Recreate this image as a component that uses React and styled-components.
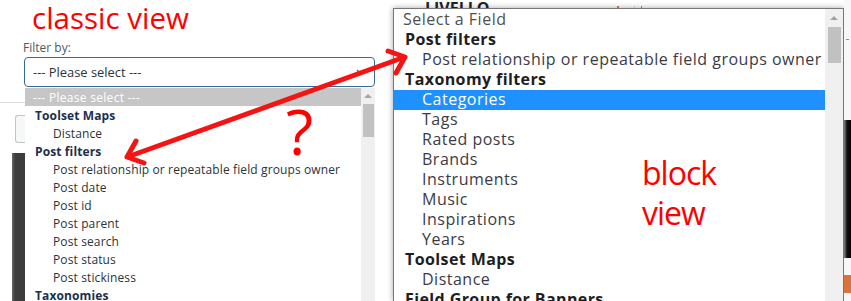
import React from 'react';
import styled, { createGlobalStyle } from 'styled-components';

const GlobalStyle = createGlobalStyle`
  html, body { margin: 0; padding: 0; background: #fff; }
  body { font-family: "Open Sans", sans-serif; overflow: hidden; }
`;

const Page = styled.div`
  position: relative;
  width: 851px;
  height: 301px;
  overflow: hidden;
  display: flex;
  background: #fff;
`;

/* ---------- classic view (left) ---------- */
const LeftPane = styled.section`
  width: 393px;
  flex: none;
  display: flex;
  flex-direction: column;
`;

const Title = styled.div`
  height: 34px;
  padding-left: 32px;
  font-size: 29.5px;
  line-height: 36px;
  color: #ff0000;
  white-space: nowrap;
`;

const FieldLabel = styled.label`
  display: block;
  margin-top: 6px;
  padding-left: 23px;
  font-size: 12px;
  line-height: 16px;
  color: #50575e;
`;

const SelectBox = styled.div`
  margin: 1px 0 0 24px;
  width: 351px;
  height: 30px;
  box-sizing: border-box;
  border: 1px solid #3b6a93;
  border-radius: 4px;
  display: flex;
  align-items: center;
  justify-content: space-between;
  padding: 0 9px 0 8px;
  font-size: 12.9px;
  color: #2c3338;
  background: #fff;
`;

const DropRow = styled.div`
  flex: 1;
  margin-top: 1px;
  display: grid;
  grid-template-columns: 25px 350px 18px;
  min-height: 0;
`;

const Gutter = styled.div`
  display: flex;
  flex-direction: column;
`;

const GutterLine = styled.div`
  margin-top: 14px;
  height: 1px;
  background: #dcdcde;
`;

const GutterButton = styled.div`
  margin: 12px 0 0 15px;
  height: 28px;
  box-sizing: border-box;
  border: 1px solid #c3c4c7;
  border-right: none;
  border-radius: 3px 0 0 3px;
  background: #f6f7f7;
`;

const GutterDark = styled.div`
  margin: 10px 0 0 12px;
  flex: 1;
  background: linear-gradient(90deg, #6a6a6a, #3e3e3e 3px, #3c3c3c);
`;

const ListBox = styled.div`
  display: flex;
  background: #fff;
  overflow: hidden;
`;

const Options = styled.ul`
  list-style: none;
  margin: 0;
  padding: 0;
  flex: 1;
  display: flex;
  flex-direction: column;
`;

const ClassicOption = styled.li`
  height: 18px;
  flex: none;
  line-height: 19px;
  font-size: 12px;
  letter-spacing: ${p => (p.$kind === 'placeholder' ? '0.3px' : '0.12px')};
  white-space: nowrap;
  padding-left: ${p => (p.$kind === 'group' ? '10px' : p.$kind === 'item' ? '28px' : '8px')};
  font-weight: ${p => (p.$kind === 'group' ? 700 : 400)};
  color: ${p => (p.$kind === 'placeholder' ? '#fff' : p.$kind === 'group' ? '#1d2f4c' : '#2c3338')};
  background: ${p => (p.$kind === 'placeholder' ? '#c6c6c6' : 'transparent')};
`;

const Scroll = styled.div`
  width: ${p => p.$w}px;
  flex: none;
  background: #f0f0f0;
  display: flex;
  flex-direction: column;
  align-items: center;
`;

const ScrollArrow = styled.div`
  height: ${p => p.$h}px;
  width: 100%;
  display: flex;
  align-items: center;
  justify-content: center;
  &::before {
    content: '';
    border-left: 4px solid transparent;
    border-right: 4px solid transparent;
    border-bottom: 4px solid #a3a3a3;
  }
`;

const ScrollThumb = styled.div`
  width: ${p => p.$w}px;
  height: ${p => p.$h}px;
  background: #c1c1c1;
`;

const Blank = styled.div`
  background: #fff;
`;

/* ---------- block view (right) ---------- */
const RightPane = styled.section`
  width: 451px;
  flex: none;
  display: flex;
  flex-direction: column;
`;

const TopStrip = styled.div`
  height: 8px;
  flex: none;
  display: grid;
  grid-template-columns: 32px 192px 2px 15px 1px 6px 1px 1fr;
  align-items: end;
  overflow: hidden;
`;

const StripText = styled.span`
  grid-column: 2;
  font-size: 16px;
  font-weight: 700;
  line-height: 16px;
  margin-bottom: -2px;
  color: #1d2327;
  white-space: nowrap;
`;

const StripMark = styled.span`
  grid-column: ${p => p.$col};
  height: 8px;
  background: ${p => p.$bg};
`;

const FieldList = styled.div`
  flex: 1;
  display: flex;
  border: 1px solid #777;
  border-bottom: none;
  background: #fff;
  box-shadow: 0 0 6px rgba(0, 0, 0, 0.35);
  min-height: 0;
`;

const FieldOptions = styled.ul`
  list-style: none;
  margin: 0;
  padding: 1px 0 0;
  flex: 1;
  display: flex;
  flex-direction: column;
`;

const FieldOption = styled.li`
  height: 20px;
  flex: none;
  box-sizing: border-box;
  padding-bottom: 2px;
  line-height: 18px;
  font-size: 16px;
  white-space: nowrap;
  letter-spacing: ${p => (p.$kind === 'group' ? '0.4px' : '0.5px')};
  padding-left: ${p => (p.$kind === 'group' ? '11px' : p.$kind === 'item' ? '28px' : '9px')};
  font-weight: ${p => (p.$kind === 'group' ? 700 : 400)};
  color: ${p =>
    p.$active ? '#fff' : p.$kind === 'group' ? '#1e1e1e' : p.$kind === 'item' ? '#3b3b47' : '#505050'};
  background: ${p => (p.$active ? '#1e90ff' : 'transparent')};
`;

const RightEdge = styled.div`
  width: 7px;
  flex: none;
  display: flex;
  flex-direction: column;
  background: #f7f7f7;
`;

const EdgeDash = styled.div`
  margin: 39px 0 0 2px;
  height: 1px;
  background: repeating-linear-gradient(90deg, #e07a3a 0 3px, transparent 3px 5px);
`;

const EdgeDark = styled.div`
  margin-top: 80px;
  height: 138px;
  background: linear-gradient(90deg, #888, #111 3px, #000);
`;

const EdgeOrange = styled.div`
  margin-top: 17px;
  height: 18px;
  background: #d9733a;
`;

/* ---------- annotations ---------- */
const AnnotationLayer = styled.svg`
  position: absolute;
  left: 0;
  top: 0;
  pointer-events: none;
`;

const QuestionMark = styled.span`
  position: absolute;
  left: 286px;
  top: 99px;
  font-size: 63px;
  line-height: 63px;
  color: #ff0000;
`;

const BlockViewNote = styled.div`
  position: absolute;
  left: 642px;
  top: 153px;
  font-size: 32px;
  line-height: 40px;
  letter-spacing: -1px;
  color: #ff0000;
`;

const classicOptions = [
  ['placeholder', '--- Please select ---'],
  ['group', 'Toolset Maps'],
  ['item', 'Distance'],
  ['group', 'Post filters'],
  ['item', 'Post relationship or repeatable field groups owner'],
  ['item', 'Post date'],
  ['item', 'Post id'],
  ['item', 'Post parent'],
  ['item', 'Post search'],
  ['item', 'Post status'],
  ['item', 'Post stickiness'],
  ['group', 'Taxonomies'],
];

const blockOptions = [
  ['placeholder', 'Select a Field'],
  ['group', 'Post filters'],
  ['item', 'Post relationship or repeatable field groups owner'],
  ['group', 'Taxonomy filters'],
  ['item', 'Categories', true],
  ['item', 'Tags'],
  ['item', 'Rated posts'],
  ['item', 'Brands'],
  ['item', 'Instruments'],
  ['item', 'Music'],
  ['item', 'Inspirations'],
  ['item', 'Years'],
  ['group', 'Toolset Maps'],
  ['item', 'Distance'],
  ['group', 'Field Group for Banners'],
];

export default function App() {
  return (
    <>
      <GlobalStyle />
      <Page>
        <LeftPane>
          <Title>classic view</Title>
          <FieldLabel>Filter by:</FieldLabel>
          <SelectBox>
            <span>--- Please select ---</span>
            <svg width="9" height="6" viewBox="0 0 9 6">
              <path d="M1 1l3.5 3.5L8 1" stroke="#50575e" strokeWidth="1.3" fill="none" />
            </svg>
          </SelectBox>
          <DropRow>
            <Gutter>
              <GutterLine />
              <GutterButton />
              <GutterDark />
            </Gutter>
            <ListBox>
              <Options>
                {classicOptions.map(([kind, text], i) => (
                  <ClassicOption key={i} $kind={kind}>{text}</ClassicOption>
                ))}
              </Options>
              <Scroll $w={14}>
                <ScrollArrow $h={16} />
                <ScrollThumb $w={11} $h={33} />
              </Scroll>
            </ListBox>
            <Blank />
          </DropRow>
        </LeftPane>

        <RightPane>
          <TopStrip>
            <StripText>LIVELLO</StripText>
            <StripMark $col={3} $bg="#e07a3a" />
            <StripMark $col={5} $bg="#dddddd" />
            <StripMark $col={7} $bg="repeating-linear-gradient(180deg, #e07a3a 0 2px, transparent 2px 4px)" />
          </TopStrip>
          <FieldList>
            <FieldOptions>
              {blockOptions.map(([kind, text, active], i) => (
                <FieldOption key={i} $kind={kind} $active={active}>{text}</FieldOption>
              ))}
            </FieldOptions>
            <Scroll $w={18}>
              <ScrollArrow $h={18} />
              <ScrollThumb $w={13} $h={36} />
            </Scroll>
          </FieldList>
        </RightPane>

        <RightEdge>
          <EdgeDash />
          <EdgeDark />
          <EdgeOrange />
        </RightEdge>

        <AnnotationLayer width="851" height="301" viewBox="0 0 851 301">
          <g stroke="#f41414" strokeWidth="5" strokeLinecap="round" strokeLinejoin="round" fill="none">
            <line x1="130" y1="156" x2="402" y2="58" />
            <polyline points="136,141 127,157 144,163" />
            <polyline points="388,51 405,57 396,73" />
          </g>
        </AnnotationLayer>
        <QuestionMark>?</QuestionMark>
        <BlockViewNote>
          block
          <br />
          view
        </BlockViewNote>
      </Page>
    </>
  );
}
